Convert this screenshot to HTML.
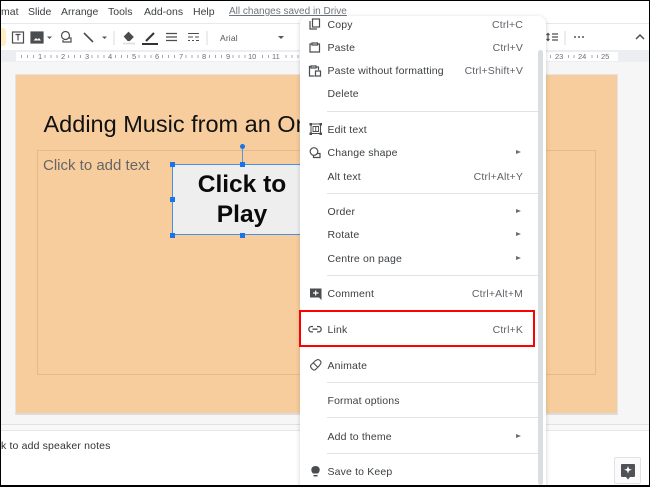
<!DOCTYPE html>
<html><head><meta charset="utf-8"><style>
html,body{margin:0;padding:0;background:#fff}
#o{position:relative;width:650px;height:487px;overflow:hidden}
#r{position:relative;width:650px;height:487px;overflow:hidden;background:#f6f6f7;font-family:"Liberation Sans",sans-serif;color:#3c4043;filter:blur(.3px)}
.a{position:absolute}
.t{position:absolute;white-space:nowrap;font-size:10.5px;line-height:12px;color:#3c4043;letter-spacing:.15px}
.m{left:327.5px}
.s{right:127px;color:#5f6368}
.sep{position:absolute;left:327px;width:211px;height:1px;background:#dfe3e6}
.ar{position:absolute;left:516px;width:0;height:0;border-left:5px solid #6b6f73;border-top:2.5px solid transparent;border-bottom:2.5px solid transparent}
.h{position:absolute;width:5px;height:5px;background:#1a73e8}
svg{position:absolute;overflow:visible}
.n{position:absolute;top:6px;font-size:10.5px;line-height:12px;color:#3c4043;white-space:nowrap}
.rn{position:absolute;top:52px;font-size:7.5px;line-height:9px;color:#6a6e72;background:#fff;padding:0 1px}
</style></head><body><div id="o"><div id="r">
<div class="a" style="left:0;top:0;width:650px;height:23px;background:#fff"></div>
<div class="n" style="left:1px">mat</div><div class="n" style="left:28px">Slide</div><div class="n" style="left:61px">Arrange</div><div class="n" style="left:108px">Tools</div><div class="n" style="left:144px">Add-ons</div><div class="n" style="left:193px">Help</div>
<div class="n" style="left:229px;color:#70757a;text-decoration:underline;font-size:10px">All changes saved in Drive</div>
<div class="a" style="left:0;top:23px;width:650px;height:27px;background:#fff;border-top:1px solid #e6e8ea;box-sizing:border-box"></div>
<div class="a" style="left:0;top:28px;width:6px;height:18px;background:#feefc3;border-radius:0 3px 3px 0"></div>
<svg style="left:0;top:0" width="650" height="52" fill="none" stroke="#4a4d50" stroke-width="1.2">
<rect x="12.500" y="32" width="11" height="11"/><path d="M15.500 34.500h5M18 34.500v6"/>
<rect x="31" y="32" width="12" height="11" fill="#4a4d50"/><path d="M33.500 40.500l2.500-2.500 1.500 1.500 1.500-1.500 2 2.500z" fill="#fff" stroke="none"/>
<path d="M47 36.500l2.500 2.500 2.500-2.500z" fill="#555" stroke="none"/>
<circle cx="65.500" cy="35.500" r="4"/><path d="M68 38h3v4h-8v-2"/>
<path d="M84 33l9 9" stroke-width="1.600"/><path d="M102 36.500l2.500 2.500 2.500-2.500z" fill="#555" stroke="none"/>
<path d="M114 31v14" stroke="#dfe1e3"/>
<path d="M124.500 36.500l4-4 4.500 4.500-3.500 3.500h-1.500z" fill="#4a4d50"/><path d="M123 43.500h12" stroke="#dcdcdc" stroke-width="1.500"/>
<path d="M142 44h16" stroke="#333" stroke-width="2"/><path d="M146 41l8-8" stroke="#333" stroke-width="2"/>
<path d="M166 33.500h11M166 37h11M166 40.500h11" stroke-width="1.300"/>
<path d="M188 33.500h11M188 37h5M195 37h4M188 40.500h2M192 40.500h2M196 40.500h3" stroke-width="1.100"/>
<path d="M207 31v14" stroke="#dfe1e3"/>
<path d="M278 36l3 3 3-3z" fill="#555" stroke="none"/>
<path d="M548 33.500v7M546.500 35l1.500-1.500 1.500 1.500M546.500 39l1.500 1.500 1.500-1.500M552 34h6M552 37h6M552 40h6"/>
<path d="M565 31v14" stroke="#dfe1e3"/>
<path d="M574 37h2M578 37h2M582 37h2" stroke="#555" stroke-width="1.500"/>
<path d="M636 39l4-4 4 4" stroke-width="1.500"/>
</svg>
<div class="t" style="left:220px;top:32px;font-size:8.500px;color:#555">Arial</div>
<div class="a" style="left:0;top:50px;width:650px;height:12px;background:#eceef1"></div>
<div class="a" style="left:16px;top:52px;width:602px;height:9px;background:#fff"></div>
<div class="a" style="left:21px;top:55px;width:592px;height:3px;background:repeating-linear-gradient(90deg,#a5a8ab 0,#a5a8ab 1px,transparent 1px,transparent 5.880px)"></div>
<div class="rn" style="left:37px">1</div><div class="rn" style="left:60px">2</div><div class="rn" style="left:84px">3</div><div class="rn" style="left:107px">4</div><div class="rn" style="left:131px">5</div><div class="rn" style="left:154px">6</div><div class="rn" style="left:178px">7</div><div class="rn" style="left:201px">8</div><div class="rn" style="left:225px">9</div><div class="rn" style="left:247px">10</div><div class="rn" style="left:271px">11</div><div class="rn" style="left:554px">23</div><div class="rn" style="left:577px">24</div><div class="rn" style="left:600px">25</div>
<div class="a" style="left:15px;top:74px;width:603px;height:341px;background:#f7cd9d;border:1px solid #e4e4e4;border-bottom:2px solid #dcdcdc;box-sizing:border-box"></div>
<div class="a" style="left:37px;top:150px;width:559px;height:225px;border:1px solid #e3b98d;box-sizing:border-box"></div>
<div class="t" style="left:43.500px;top:110px;font-size:23.500px;line-height:28px;color:#111;letter-spacing:0">Adding Music from an Online Source</div>
<div class="t" style="left:43px;top:157px;font-size:15px;line-height:18px;color:#666;letter-spacing:0">Click to add text</div>
<div class="a" style="left:172px;top:164px;width:140px;height:71px;background:#eee;border:1.500px solid #4a90e2;box-sizing:border-box"></div>
<div class="a" style="left:172px;top:170px;width:140px;text-align:center;font-weight:bold;font-size:24.500px;line-height:30px;color:#0a0a0a">Click to<br>Play</div>
<div class="a" style="left:242px;top:148px;width:1px;height:16px;background:#5c94d8"></div>
<div class="a" style="left:240px;top:144px;width:5px;height:5px;border-radius:50%;background:#1a73e8"></div>
<div class="h" style="left:170px;top:162px"></div><div class="h" style="left:240px;top:162px"></div><div class="h" style="left:170px;top:197px"></div><div class="h" style="left:170px;top:233px"></div><div class="h" style="left:240px;top:233px"></div>
<div class="a" style="left:0;top:424px;width:650px;height:1px;background:#e2e2e2"></div>
<div class="a" style="left:0;top:425px;width:650px;height:5px;background:#f8f8f8"></div>
<div class="a" style="left:0;top:430px;width:650px;height:57px;background:#fff;border-top:1px solid #e6e6e6;box-sizing:border-box"></div>
<div class="t" style="left:1px;top:440px;color:#333">k to add speaker notes</div>
<div class="a" style="left:614px;top:457px;width:27px;height:27px;background:#fbfbfb;border:1px solid #e2e2e2;box-sizing:border-box;border-radius:2px"></div>
<svg style="left:0;top:0" width="650" height="487"><path d="M622 464h12a1 1 0 0 1 1 1v11a1 1 0 0 1-1 1h-4l-2 2.500-2-2.500h-4a1 1 0 0 1-1-1v-11a1 1 0 0 1 1-1z" fill="#4f5256"/><path d="M628 466l1 2.800 2.800 1-2.800 1-1 2.800-1-2.800-2.800-1 2.800-1z" fill="#fff"/></svg>

<div class="a" style="left:300px;top:16px;width:246px;height:480px;background:#fff;border-radius:8px 8px 0 0;box-shadow:0 1px 4px rgba(60,64,67,.25)"></div>
<div class="a" style="left:538px;top:50px;width:5px;height:435px;background:#d9dfe1;border-radius:3px"></div>
<div class="t m" style="top:19px">Copy</div><div class="t s" style="top:19px">Ctrl+C</div>
<div class="t m" style="top:42px">Paste</div><div class="t s" style="top:42px">Ctrl+V</div>
<div class="t m" style="top:65px">Paste without formatting</div><div class="t s" style="top:65px">Ctrl+Shift+V</div>
<div class="t m" style="top:88px">Delete</div>
<div class="sep" style="top:111px"></div>
<div class="t m" style="top:124px">Edit text</div>
<div class="t m" style="top:147px">Change shape</div><div class="ar" style="top:150px"></div>
<div class="t m" style="top:171px">Alt text</div><div class="t s" style="top:171px">Ctrl+Alt+Y</div>
<div class="sep" style="top:193px"></div>
<div class="t m" style="top:206px">Order</div><div class="ar" style="top:209px"></div>
<div class="t m" style="top:229px">Rotate</div><div class="ar" style="top:232px"></div>
<div class="t m" style="top:253px">Centre on page</div><div class="ar" style="top:256px"></div>
<div class="sep" style="top:275px"></div>
<div class="t m" style="top:288px">Comment</div><div class="t s" style="top:288px">Ctrl+Alt+M</div>
<div class="t m" style="top:324px">Link</div><div class="t s" style="top:324px">Ctrl+K</div>
<div class="t m" style="top:360px">Animate</div>
<div class="sep" style="top:382px"></div>
<div class="t m" style="top:395px">Format options</div>
<div class="sep" style="top:417px"></div>
<div class="t m" style="top:431px">Add to theme</div><div class="ar" style="top:434px"></div>
<div class="sep" style="top:453px"></div>
<div class="t m" style="top:466px">Save to Keep</div>
<svg style="left:0;top:0" width="650" height="487" fill="none" stroke="#4a4d50" stroke-width="1.200">
<path d="M310 21v8h7"/><rect x="312.500" y="19" width="7" height="8"/>
<path d="M312 44h-2v8h9.500v-8h-2M312 43h5.500v2H312z"/>
<path d="M311 66.500h-1.500v9.500h5M311 66h5v2h-5zM316.500 67h2v3M315.500 71h5v5h-5z"/>
<rect x="311" y="124" width="9.500" height="9.500" stroke-width="1"/><path d="M313 131.500v-5h5.500v5zM315.700 126.500v5" stroke-width=".9"/><rect x="309.500" y="123" width="2.500" height="2.500" fill="#4a4d50" stroke="none"/><rect x="319.500" y="123" width="2.500" height="2.500" fill="#4a4d50" stroke="none"/><rect x="309.500" y="132.500" width="2.500" height="2.500" fill="#4a4d50" stroke="none"/><rect x="319.500" y="132.500" width="2.500" height="2.500" fill="#4a4d50" stroke="none"/>
<circle cx="314" cy="151.500" r="3.800"/><path d="M317 153.500h3v4h-6.500v-2"/>
<path d="M310 288.500h11.500v11.500l-2.500-2.500H310z" fill="#4a4d50" stroke="none"/><path d="M315.700 290.500v5M313 293h5.500" stroke="#fff"/>
<path d="M313 326.500h-1.500a2.700 2.700 0 0 0 0 5.400h1.500M317 326.500h1.500a2.700 2.700 0 0 1 0 5.400H317M312.500 329.200h5" stroke-width="1.300"/>
<path d="M310.500 365.500l4.500-4.500 2.500-1.500c2 0 3.500 1.500 3.500 3.500l-1.500 2.500-4.500 4.500c-2 .5-4.500-2-4.500-4.500zM313 362.500l5 5" stroke-width="1.100"/>
<path d="M313 473.500c-3-3-2-7.500 2.500-7.500s5.500 4.500 2.500 7.500z" fill="#4a4d50" stroke="none"/><path d="M313.500 475.700h4" stroke-width="1.500"/>
</svg>
<div class="a" style="left:299px;top:310px;width:236px;height:37px;border:2px solid #f00;box-sizing:border-box"></div>
</div>
<div class="a" style="left:0;top:0;width:650px;height:487px;border:1px solid #000;border-bottom-width:2px;box-sizing:border-box;pointer-events:none"></div>
</div></body></html>
